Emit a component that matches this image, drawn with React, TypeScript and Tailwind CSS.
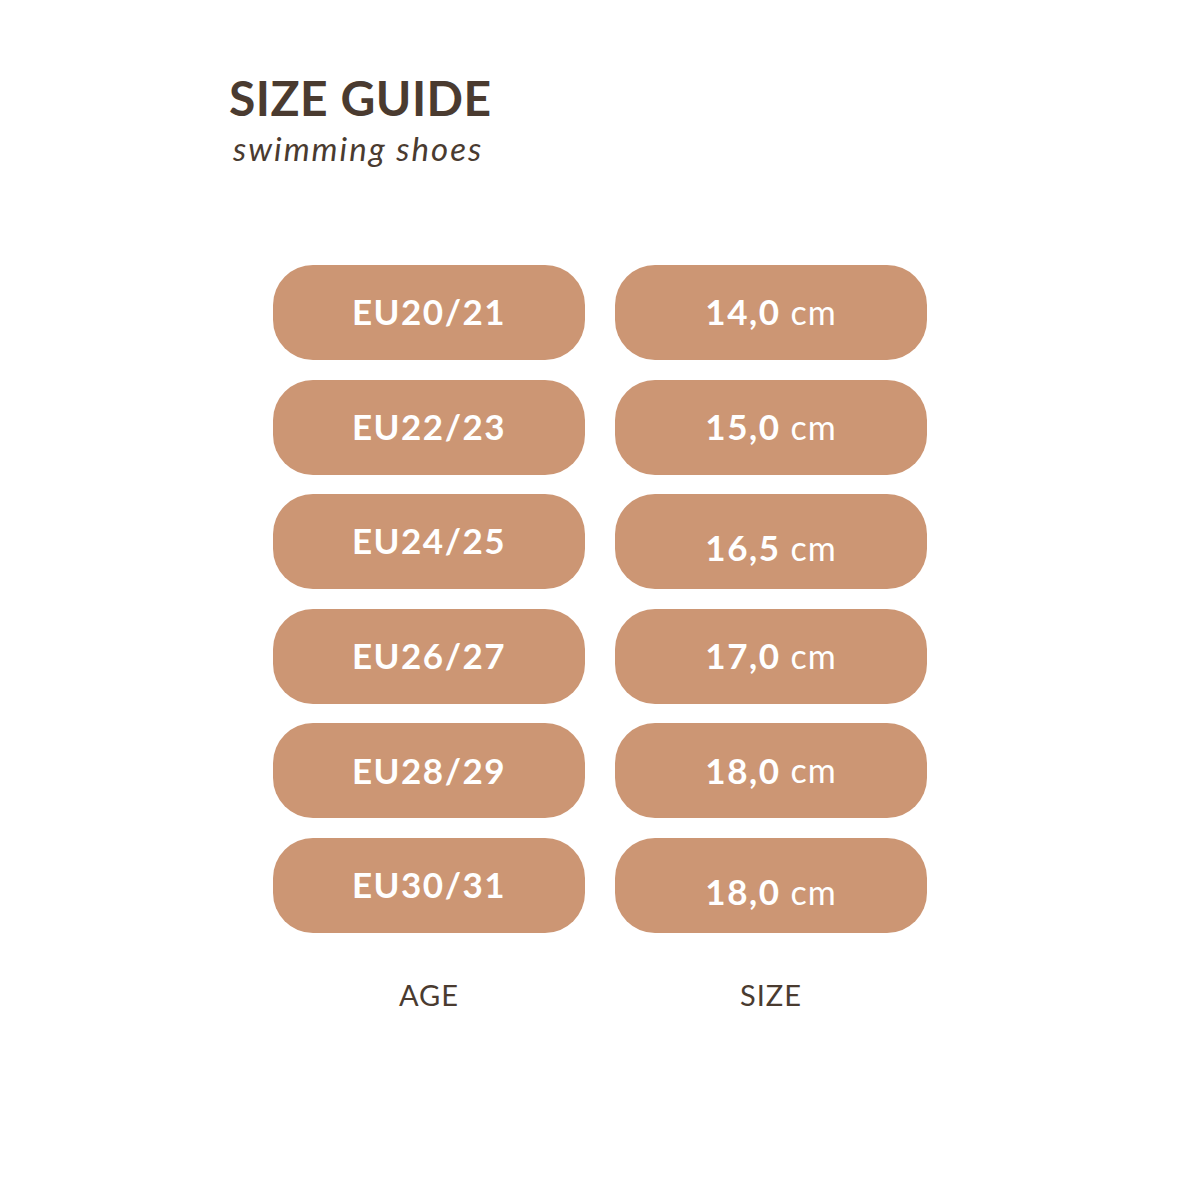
import React from "react";

const rows = [
  ["EU20/21", "14,0", ""],
  ["EU22/23", "15,0", ""],
  ["EU24/25", "16,5", "pt-[12px]"],
  ["EU26/27", "17,0", ""],
  ["EU28/29", "18,0", ""],
  ["EU30/31", "18,0", "pt-[12px]"],
];

export default function App() {
  return (
    <div className="w-[1200px] h-[1200px] bg-white text-[#4a3b30]" style={{ fontFamily: "Lato, 'Open Sans', sans-serif" }}>
      <div className="pt-[70px] pl-[229px]">
        <div className="text-[48px] font-bold leading-[56px] tracking-[0.5px]">SIZE GUIDE</div>
        <div className="pl-[4px] text-[33px] italic leading-[40px] tracking-[2px] mt-[2px]">swimming shoes</div>
      </div>
      <div className="pl-[273px] pt-[97px]">
        <div className="grid grid-cols-[312px_312px] gap-x-[30px] gap-y-[19.6px]">
          {rows.map(([eu, cm, off], i) => (
            <React.Fragment key={i}>
              <div className="h-[95px] rounded-[40px] bg-[#cc9674] flex items-center justify-center pb-[2px] text-white text-[35px] font-bold tracking-[1.5px]">
                {eu}
              </div>
              <div className={`h-[95px] rounded-[40px] bg-[#cc9674] flex items-center justify-center text-white ${off || "pb-[2px]"}`}>
                <span className="text-[35px] font-bold tracking-[1.5px]">{cm}</span>
                <span className="text-[34px] ml-[10px] tracking-[1px]">cm</span>
              </div>
            </React.Fragment>
          ))}
        </div>
        <div className="grid grid-cols-[312px_312px] gap-x-[30px] mt-[42px]">
          <div className="text-center text-[29px] leading-[40px] tracking-[1px]">AGE</div>
          <div className="text-center text-[29px] leading-[40px] tracking-[1px]">SIZE</div>
        </div>
      </div>
    </div>
  );
}
